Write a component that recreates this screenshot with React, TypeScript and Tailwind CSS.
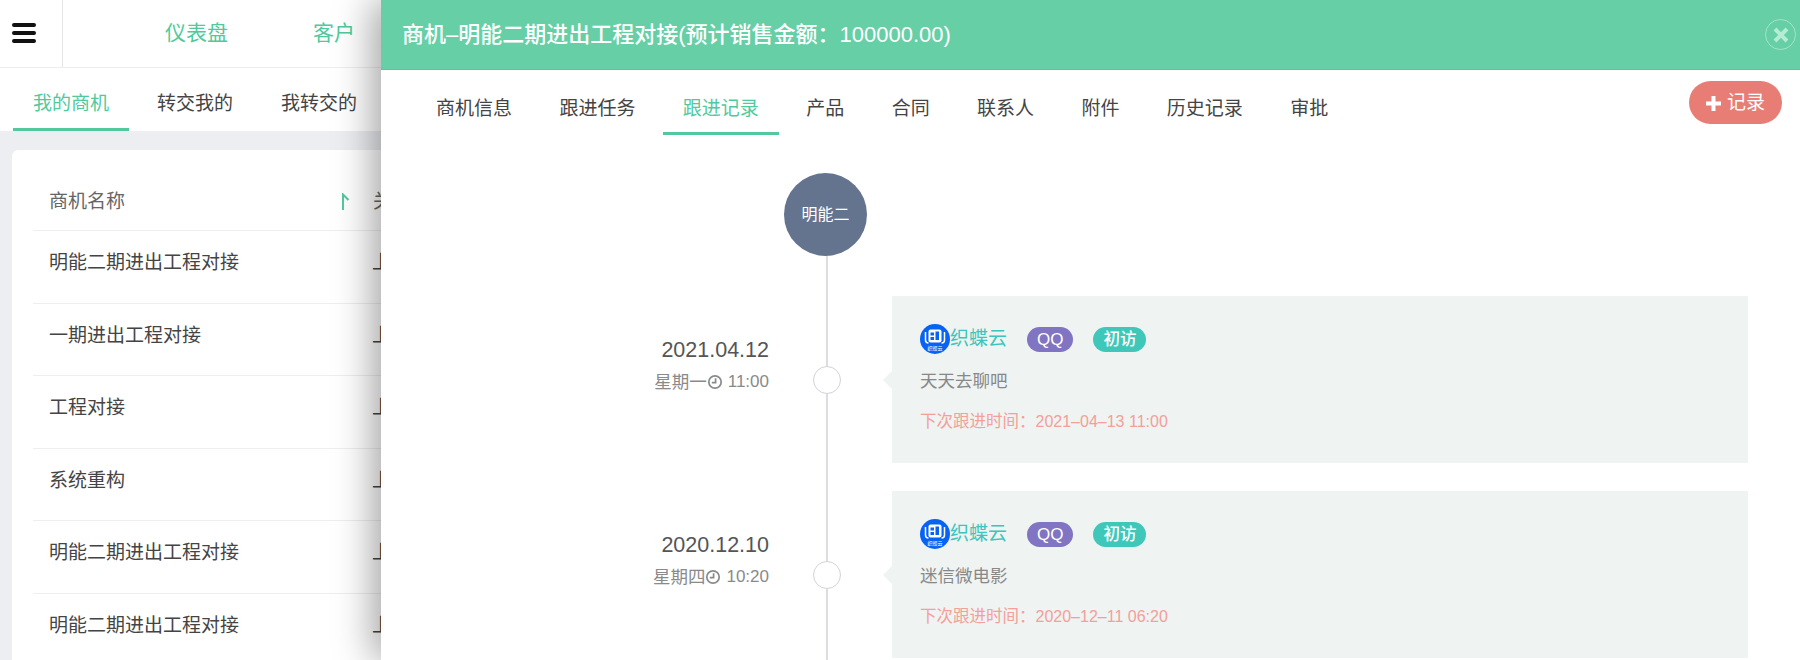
const navItems = ["仪表盘", "客户"];
const listTabs = ["我的商机", "转交我的", "我转交的"];
const rows = ["明能二期进出工程对接", "一期进出工程对接", "工程对接", "系统重构", "明能二期进出工程对接", "明能二期进出工程对接"];
const drawerTabs = ["商机信息", "跟进任务", "跟进记录", "产品", "合同", "联系人", "附件", "历史记录", "审批"];
const records = [
  { date: "2021.04.12", week: "星期一", time: "11:00", content: "天天去聊吧", next: "2021–04–13 11:00" },
  { date: "2020.12.10", week: "星期四", time: "10:20", content: "迷信微电影", next: "2020–12–11 06:20" },
];

function ClockIcon() {
  return (
    <svg width="16" height="16" viewBox="0 0 16 16" fill="none" stroke="#8a8a8a" strokeWidth="1.7">
      <circle cx="8" cy="8" r="6.2" />
      <path d="M8.6 4.2v4.4H4.8" />
    </svg>
  );
}

function SortArrow() {
  return (
    <svg width="8" height="17" viewBox="0 0 8 17" fill="none" stroke="#52c99c" strokeWidth="2">
      <path d="M2 17V1.5L7.5 7" />
    </svg>
  );
}

function LogoBadge() {
  return (
    <svg width="30" height="30" viewBox="0 0 30 30" className="shrink-0">
      <circle cx="15" cy="15" r="15" fill="#0763f4" />
      <rect x="8.5" y="5.5" width="13" height="13" rx="2" fill="#fff" />
      <path d="M5.5 8v8q0 3 3 3M24.5 8v8q0 3-3 3" fill="none" stroke="#fff" strokeWidth="1.5" />
      <path d="M10.5 8.5h3.5v3h-3.5zM15.5 7.5h3.5v8.5h-3.5zM10.5 13h3.5v3h-3.5z" fill="#0763f4" />
      <text x="15" y="26" textAnchor="middle" fontSize="5" fill="#fff">织蝶云</text>
    </svg>
  );
}

function RecordRow({ record }: { record: (typeof records)[number] }) {
  return (
    <div className="flex">
      <div className="w-[388px] pt-[40px] text-right">
        <div className="text-[21.5px] leading-[28px] text-[#555]">{record.date}</div>
        <div className="mt-[4px] flex items-center justify-end text-[17.5px] leading-[28px] text-[#8a8a8a]">
          {record.week}
          <ClockIcon />
          <span className="ml-[5px] text-[17px]">{record.time}</span>
        </div>
      </div>
      <div className="ml-[44px] flex w-[28px] flex-col items-center">
        <div className="h-[70px] w-[2px] bg-[#dcdce2]" />
        <div className="h-[28px] w-[28px] rounded-full border-[1.5px] border-[#d2d2da] bg-white" />
        <div className="w-[2px] flex-1 bg-[#dcdce2]" />
      </div>
      <div className="ml-[51px] w-[856px] pb-[28px]">
        <div className="relative h-[167px] bg-[#eff3f2] pl-[28px] pt-[28px]">
          <div className="absolute left-[-9px] top-[75px] h-0 w-0 border-y-[9px] border-r-[9px] border-y-transparent border-r-[#eff3f2]" />
          <div className="flex items-center">
            <LogoBadge />
            <span className="text-[19px] leading-[30px] text-[#3cc5bc]">织蝶云</span>
            <span className="ml-[20px] rounded-full bg-[#8174c2] px-[10px] text-[17px] font-medium leading-[25px] text-white">QQ</span>
            <span className="ml-[20px] rounded-full bg-[#3fc8b9] px-[10px] text-[16.5px] font-medium leading-[25px] text-white">初访</span>
          </div>
          <div className="mt-[13px] text-[17.5px] leading-[28px] text-[#888]">{record.content}</div>
          <div className="mt-[12px] text-[16.5px] leading-[28px] text-[#f3a09a]">
            下次跟进时间：<span className="text-[16px]">{record.next}</span>
          </div>
        </div>
      </div>
    </div>
  );
}

export default function App() {
  return (
    <div className="relative h-[660px] w-[1800px] overflow-hidden bg-white font-['Liberation_Sans','Noto_Sans_CJK_SC',sans-serif]">
      {/* page behind the drawer */}
      <div className="flex h-[68px] border-b border-[#eee]">
        <div className="flex w-[63px] flex-col gap-[4px] border-r border-[#e5e5e5] pl-[12px] pt-[23px]">
          <div className="h-[4px] w-[24px] rounded-sm bg-[#111]" />
          <div className="h-[4px] w-[24px] rounded-sm bg-[#111]" />
          <div className="h-[4px] w-[24px] rounded-sm bg-[#111]" />
        </div>
        <div className="ml-[102px] flex gap-[85px] pt-[16px]">
          {navItems.map((item) => (
            <span key={item} className="text-[21px] leading-[34px] text-[#52c99c]">{item}</span>
          ))}
        </div>
      </div>
      <div className="flex h-[63px] gap-[8px] pl-[13px]">
        {listTabs.map((tab, i) => (
          <div
            key={tab}
            className={`h-[63px] px-[20px] pt-[22px] text-[19px] leading-[28px] ${
              i === 0 ? "border-b-[3px] border-[#52c99c] text-[#52c99c]" : "text-[#444]"
            }`}
          >
            {tab}
          </div>
        ))}
      </div>
      <div className="h-[529px] bg-[#eceef2] pl-[12px] pt-[19px]">
        <div className="h-[520px] rounded-md bg-white pl-[21px]">
          <div className="flex h-[81px] border-b border-[#eee] pl-[16px] pt-[38px] text-[19px] leading-[28px] text-[#666]">
            <span>商机名称</span>
            <span className="ml-[216px] pt-[5px]"><SortArrow /></span>
            <span className="ml-[24px]">关</span>
          </div>
          {rows.map((name, i) => (
            <div key={i} className="flex h-[72.5px] border-b border-[#eee] pl-[16px] pt-[18px] text-[19px] leading-[28px] text-[#444]">
              <span className="w-[323px]">{name}</span>
              <span>上</span>
            </div>
          ))}
        </div>
      </div>

      {/* drawer */}
      <div className="absolute bottom-0 left-[381px] right-0 top-0 bg-white shadow-[-8px_0_36px_rgba(0,0,0,0.36)]">
        <div className="flex h-[70px] items-center justify-between border-b border-[#55c99a] bg-[#66cfa6] pl-[21px] pr-[4px]">
          <span className="text-[22px] font-medium text-white">商机–明能二期进出工程对接(预计销售金额：100000.00)</span>
          <div className="flex h-[31px] w-[31px] items-center justify-center rounded-full border border-white/40">
            <svg width="16" height="16" viewBox="0 0 16 16" stroke="#b5ecd4" strokeWidth="4">
              <path d="M2 2l12 12M14 2L2 14" />
            </svg>
          </div>
        </div>
        <div className="relative flex h-[65px] gap-[7.4px] pl-[35px]">
          {drawerTabs.map((tab) => (
            <div
              key={tab}
              className={`h-[65px] px-[20px] pt-[25px] text-[19px] leading-[28px] ${
                tab === "跟进记录" ? "border-b-[3px] border-[#52c99c] text-[#52c99c]" : "text-[#444]"
              }`}
            >
              {tab}
            </div>
          ))}
          <button className="absolute right-[18px] top-[11px] flex h-[43px] w-[93px] items-center justify-center gap-[6px] rounded-full bg-[#e87d75] pt-[1px] text-[19px] text-white">
            <svg width="15" height="15" viewBox="0 0 15 15" stroke="#fff" strokeWidth="4">
              <path d="M7.5 0v15M0 7.5h15" />
            </svg>
            记录
          </button>
        </div>
        <div className="pt-[38px]">
          <div className="ml-[403px] flex h-[83px] w-[83px] items-center justify-center rounded-full bg-[#64748f] text-[16px] text-white">
            明能二
          </div>
          <div className="ml-[445px] h-[40px] w-[2px] bg-[#dcdce2]" />
          {records.map((record) => (
            <RecordRow key={record.date} record={record} />
          ))}
        </div>
      </div>
    </div>
  );
}
